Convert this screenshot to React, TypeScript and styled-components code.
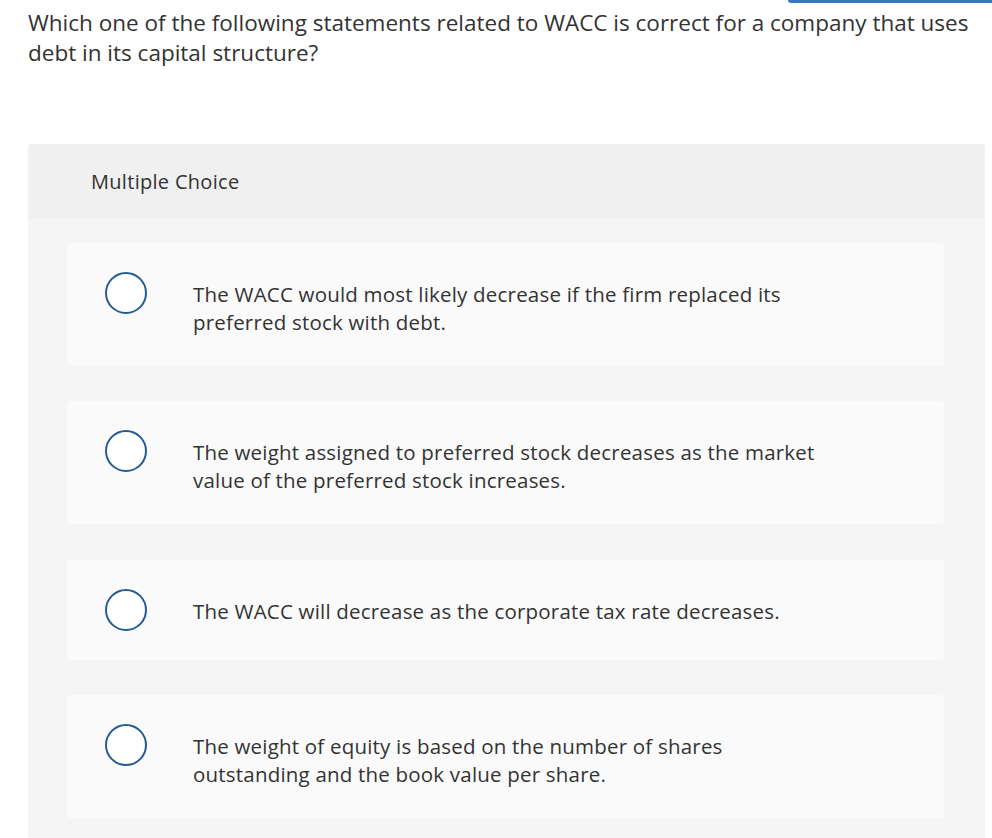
import React from "react";
import styled, { createGlobalStyle } from "styled-components";

const Global = createGlobalStyle`
  html, body { margin: 0; padding: 0; background: #ffffff; }
  body { font-family: "Open Sans", "Liberation Sans", sans-serif; color: #333333; }
`;

const Page = styled.div`
  width: 992px;
  padding: 0 7px 0 28px;
  box-sizing: border-box;
  display: flex;
  flex-direction: column;
`;

const TopStrip = styled.div`
  display: flex;
  justify-content: flex-end;
  height: 3px;
  margin-right: -7px;
`;

const TopBar = styled.div`
  width: 204px;
  height: 3px;
  background: #3b77bd;
  border-bottom-left-radius: 3px;
`;

const Question = styled.p`
  margin: 5px 0 76px 0;
  font-size: 22.5px;
  letter-spacing: 0px;
  line-height: 30px;
  color: #333333;
`;

const Panel = styled.section`
  background: #f5f5f5;
  border-radius: 4px 4px 0 0;
  display: flex;
  flex-direction: column;
  padding-bottom: 20px;
`;

const PanelHeader = styled.div`
  background: #f0f0f0;
  height: 74px;
  border-radius: 4px 4px 0 0;
  display: flex;
  align-items: center;
  padding-left: 63px;
  font-size: 20px;
  letter-spacing: 0.3px;
  color: #333333;
`;

const Options = styled.div`
  display: flex;
  flex-direction: column;
  gap: 35.4px;
  padding: 25px 41px 0 39px;
`;

const OptionCard = styled.label`
  background: #fafafa;
  border-radius: 4px;
  display: flex;
  align-items: flex-start;
  padding: 29px 20px 29px 38px;
  cursor: pointer;
`;

const Radio = styled.span`
  flex: none;
  width: 42px;
  height: 42px;
  box-sizing: border-box;
  border: 2px solid #245b92;
  border-radius: 50%;
  background: #ffffff;
`;

const OptionText = styled.span`
  margin: 8px 0 1px 46px;
  font-size: 20.5px;
  letter-spacing: 0.2px;
  line-height: 28px;
  color: #333333;
  max-width: 628px;
`;

const options = [
  "The WACC would most likely decrease if the firm replaced its preferred stock with debt.",
  "The weight assigned to preferred stock decreases as the market value of the preferred stock increases.",
  "The WACC will decrease as the corporate tax rate decreases.",
  "The weight of equity is based on the number of shares outstanding and the book value per share.",
];

export default function App() {
  return (
    <>
      <Global />
      <Page>
        <TopStrip>
          <TopBar />
        </TopStrip>
        <Question>
          Which one of the following statements related to WACC is correct for a company that uses debt in its capital structure?
        </Question>
        <Panel>
          <PanelHeader>Multiple Choice</PanelHeader>
          <Options>
            {options.map((o) => (
              <OptionCard key={o}>
                <Radio />
                <OptionText>{o}</OptionText>
              </OptionCard>
            ))}
          </Options>
        </Panel>
      </Page>
    </>
  );
}
